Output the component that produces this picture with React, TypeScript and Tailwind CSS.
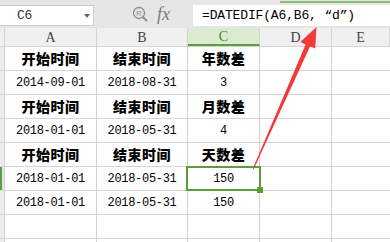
import React from "react";

const mono = "font-['Liberation_Mono',monospace]";
const cjk = "font-['Noto_Sans_CJK_SC',sans-serif]";

type Cell = { text: string; bold?: boolean };

const rows: Cell[][] = [
  [{ text: "开始时间", bold: true }, { text: "结束时间", bold: true }, { text: "年数差", bold: true }],
  [{ text: "2014-09-01" }, { text: "2018-08-31" }, { text: "3" }],
  [{ text: "开始时间", bold: true }, { text: "结束时间", bold: true }, { text: "月数差", bold: true }],
  [{ text: "2018-01-01" }, { text: "2018-05-31" }, { text: "4" }],
  [{ text: "开始时间", bold: true }, { text: "结束时间", bold: true }, { text: "天数差", bold: true }],
  [{ text: "2018-01-01" }, { text: "2018-05-31" }, { text: "150" }],
  [{ text: "2018-01-01" }, { text: "2018-05-31" }, { text: "150" }],
  [{ text: "" }, { text: "" }, { text: "" }],
  [{ text: "" }, { text: "" }, { text: "" }],
];

const widths = ["w-[92px]", "w-[91px]", "w-[72px]"];

function CellText({ cell }: { cell: Cell }) {
  if (cell.bold) {
    return <span className={`${cjk} text-[14px] font-black text-black tracking-[0.5px]`}>{cell.text}</span>;
  }
  return <span className={`${mono} text-[12px] text-black tracking-[-0.3px]`}>{cell.text}</span>;
}

function Toolbar() {
  return (
    <div className="relative flex h-[28px] bg-[#e6e6e6]">
      <div className="mt-[5px] flex h-[21px] w-[94px] items-center justify-between border-y border-r border-[#cdcdcd] bg-white pl-[17px] pr-[3px]">
        <span className={`${mono} text-[13px] text-[#333] tracking-[-0.3px]`}>C6</span>
        <span className="h-0 w-0 border-x-[3px] border-t-[4px] border-x-transparent border-t-[#666]" />
      </div>
      <div className="flex w-[99px] items-center gap-[9px] pl-[38px]">
        <svg width="16" height="17" viewBox="0 0 16 17">
          <circle cx="7" cy="7" r="5.5" fill="none" stroke="#8c8c8c" strokeWidth="1.3" />
          <text x="7" y="9.6" textAnchor="middle" fontSize="7.5" fill="#8c8c8c" fontFamily="Liberation Sans">R</text>
          <line x1="11" y1="11" x2="14.5" y2="14.5" stroke="#8c8c8c" strokeWidth="2" strokeLinecap="round" />
        </svg>
        <span className="font-['Liberation_Serif',serif] text-[18px] italic leading-none text-[#7a7a7a]">fx</span>
      </div>
      <div className="mt-[5px] flex h-[21px] flex-1 items-center bg-white pl-[9px]">
        <span className={`${mono} text-[13px] text-black tracking-[-0.15px]`}>=DATEDIF(A6,B6, “d”)</span>
      </div>
      <div className="absolute left-[280px] right-0 top-[1px] h-[2px] bg-[#8fbf6e]" />
    </div>
  );
}

function HeaderRow() {
  const letters = ["A", "B", "C", "D", "E"];
  const w = ["w-[92px]", "w-[91px]", "w-[72px]", "w-[72px]", "flex-1"];
  return (
    <div className="flex h-[19px] border-b border-[#d4d4d4] bg-[#f0f0f0]">
      <div className="w-[5px] shrink-0 border-r border-[#d4d4d4]" />
      {letters.map((l, i) => (
        <div
          key={l}
          className={`${w[i]} shrink-0 flex items-center justify-center font-['Liberation_Serif',serif] text-[14px] ${
            i === 2
              ? "border-b-2 border-r border-r-[#d4d4d4] border-b-[#5c9e36] bg-[#dcead2] text-[#3d8a24]"
              : "border-r border-[#d4d4d4] text-[#444]"
          }`}
        >
          {l}
        </div>
      ))}
    </div>
  );
}

function Arrow() {
  return (
    <svg className="pointer-events-none absolute left-0 top-0" width="390" height="242">
      <polygon
        points="252.6,169 305.6,44.5 300.3,42 316.5,27 315.2,48.6 310,46.4 253.6,169.4"
        fill="#f23a3a"
      />
    </svg>
  );
}

export default function App() {
  return (
    <div className="relative h-[242px] w-[390px] overflow-hidden bg-white">
      <Toolbar />
      <HeaderRow />
      {rows.map((row, r) => (
        <div key={r} className="flex h-[24px] border-b border-[#d4d4d4]">
          <div className={`w-[5px] shrink-0 border-r border-[#d4d4d4] ${r === 5 ? "bg-[#e4e4e4] border-l-2 border-l-[#5c9e36]" : "bg-[#ececec]"}`} />
          {row.map((cell, c) => (
            <div
              key={c}
              className={`relative ${widths[c]} shrink-0 flex items-center justify-center border-r border-[#d4d4d4]`}
            >
              <CellText cell={cell} />
              {r === 5 && c === 2 && (
                <div className="absolute left-[-2px] top-[-1px] z-10 h-[25px] w-[75px] border-2 border-[#5c9e36]">
                  <div className="absolute right-[-4px] bottom-[-4px] h-[6px] w-[6px] bg-[#5c9e36]" />
                </div>
              )}
            </div>
          ))}
          <div className="w-[72px] shrink-0 border-r border-[#d4d4d4]" />
          <div className="flex-1" />
        </div>
      ))}
      <Arrow />
    </div>
  );
}
